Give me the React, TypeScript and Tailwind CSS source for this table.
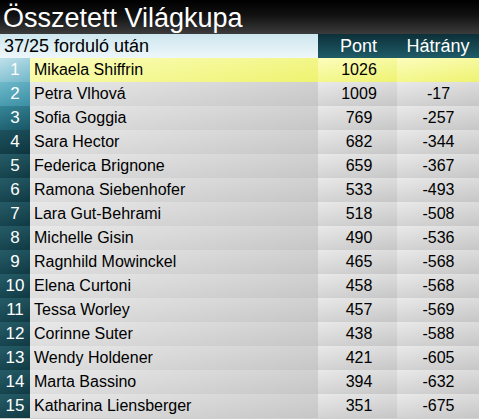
const rows = [
  { name: 'Mikaela Shiffrin', pts: 1026, gap: '' },
  { name: 'Petra Vlhová', pts: 1009, gap: '-17' },
  { name: 'Sofia Goggia', pts: 769, gap: '-257' },
  { name: 'Sara Hector', pts: 682, gap: '-344' },
  { name: 'Federica Brignone', pts: 659, gap: '-367' },
  { name: 'Ramona Siebenhofer', pts: 533, gap: '-493' },
  { name: 'Lara Gut-Behrami', pts: 518, gap: '-508' },
  { name: 'Michelle Gisin', pts: 490, gap: '-536' },
  { name: 'Ragnhild Mowinckel', pts: 465, gap: '-568' },
  { name: 'Elena Curtoni', pts: 458, gap: '-568' },
  { name: 'Tessa Worley', pts: 457, gap: '-569' },
  { name: 'Corinne Suter', pts: 438, gap: '-588' },
  { name: 'Wendy Holdener', pts: 421, gap: '-605' },
  { name: 'Marta Bassino', pts: 394, gap: '-632' },
  { name: 'Katharina Liensberger', pts: 351, gap: '-675' },
];

// rank cell shades, light on top of the table and dark teal below
const rankBg = [
  'bg-[linear-gradient(160deg,#bfe1ea,#72b7ca)]',
  'bg-[linear-gradient(160deg,#6fb9cb,#3a8ea3)]',
  'bg-[linear-gradient(160deg,#368698,#185665)]',
  'bg-[linear-gradient(160deg,#1d525d,#0e3540)]',
];
const darkRank = 'bg-[linear-gradient(160deg,#265c67,#103a44)]';

const grey = 'bg-[linear-gradient(170deg,#e9e9e9,#c6c6c6)]';
const yellow = 'bg-[linear-gradient(170deg,#fcfdbd,#eef370)]';

export default function App() {
  return (
    <div className="w-[479px] h-[419px] bg-[#d0d0d0] font-[family-name:'Liberation_Sans',Arial,sans-serif] overflow-hidden">
      <div className="h-[34px] pl-[3px] pt-[1px] text-[27px] leading-[34px] text-white bg-[linear-gradient(180deg,#000_0%,#111_45%,#3c3c3c_100%)]">
        Összetett Világkupa
      </div>
      <div className="flex h-[24px] text-[18px] leading-[24px]">
        <div className="w-[318px] pl-[4px] text-black bg-[linear-gradient(180deg,#cde6ee,#eef7fa)]">
          37/25 forduló után
        </div>
        <div className="flex flex-1 text-white bg-[linear-gradient(180deg,#0c3039,#1f5c68)]">
          <div className="w-[79px] text-center pl-[2px]">Pont</div>
          <div className="flex-1 text-center">Hátrány</div>
        </div>
      </div>
      {rows.map((r, i) => {
        const cell = i === 0 ? yellow : grey;
        return (
          <div key={r.name} className="flex h-[24px] text-[16px] leading-[24px] text-black">
            <div
              className={
                'w-[30px] text-center text-white text-[17px] ' + (rankBg[i] ?? darkRank)
              }
            >
              {i + 1}
            </div>
            <div className={'w-[288px] pl-[4px] ' + cell}>{r.name}</div>
            <div className={'w-[79px] text-center pl-[3px] ' + cell}>{r.pts}</div>
            <div className={'flex-1 text-center pl-[1px] ' + cell}>{r.gap}</div>
          </div>
        );
      })}
    </div>
  );
}
